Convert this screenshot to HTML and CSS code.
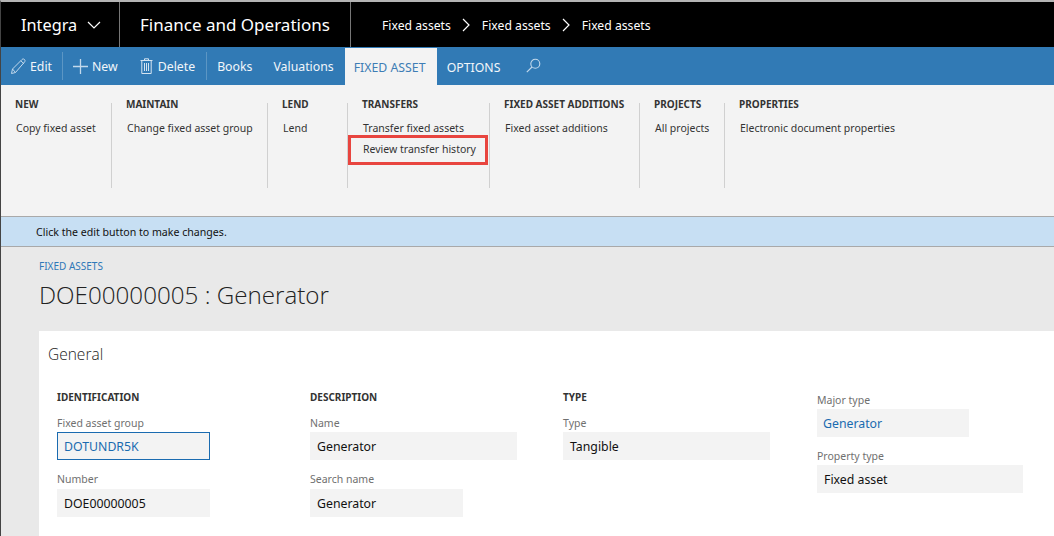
FILE: index.html
```html
<!DOCTYPE html>
<html lang="en">
<head>
<meta charset="utf-8">
<title>Fixed assets</title>
<link rel="stylesheet" href="styles.css">
</head>
<body>
<div class="app">
  <header class="topbar">
    <div class="company">Integra
      <svg class="chev-down" width="14" height="8" viewBox="0 0 14 8"><path d="M1 1l6 6 6-6" fill="none" stroke="#fff" stroke-width="1.2"/></svg>
    </div>
    <div class="appname">Finance and Operations</div>
    <nav class="crumbs">
      <span>Fixed assets</span>
      <svg width="8" height="14" viewBox="0 0 8 14"><path d="M1 1l6 6-6 6" fill="none" stroke="#fff" stroke-width="1.2"/></svg>
      <span>Fixed assets</span>
      <svg width="8" height="14" viewBox="0 0 8 14"><path d="M1 1l6 6-6 6" fill="none" stroke="#fff" stroke-width="1.2"/></svg>
      <span>Fixed assets</span>
    </nav>
  </header>
  <div class="actionbar">
    <div class="action a-edit">
      <svg width="17" height="17" viewBox="0 0 17 17"><path d="M1.500 15.500l1-4.500L12 1.500c.8-.7 1.800-.7 2.500 0s.7 1.700 0 2.500L5.500 14.500zM2.500 11l3 3.500M10.800 2.800l3.200 3" fill="none" stroke="#c3d9ec" stroke-width="1"/></svg>
      <span>Edit</span>
    </div>
    <i class="vsep"></i>
    <div class="action a-new">
      <svg width="15" height="15" viewBox="0 0 15 15"><path d="M7.500 0v15M0 7.500h15" fill="none" stroke="#c3d9ec" stroke-width="1.300"/></svg>
      <span>New</span>
    </div>
    <div class="action a-del">
      <svg width="13" height="16" viewBox="0 0 13 16"><path d="M.5 2.500h12M4.500 2.500V.8h4v1.700M1.800 2.500v13h9.400v-13M4.500 5v8M6.500 5v8M8.500 5v8" fill="none" stroke="#d5e4f1" stroke-width="1"/></svg>
      <span>Delete</span>
    </div>
    <i class="vsep"></i>
    <div class="action a-books">Books</div>
    <div class="action a-val">Valuations</div>
    <div class="tab tab-active">FIXED ASSET</div>
    <div class="tab">OPTIONS</div>
    <svg class="search" width="15" height="15" viewBox="0 0 15 15"><circle cx="9.300" cy="5.700" r="4.500" fill="none" stroke="#c3d9ec" stroke-width="1.100"/><path d="M6 9L.8 14.200" fill="none" stroke="#c3d9ec" stroke-width="1.100"/></svg>
  </div>
  <section class="ribbon">
    <div class="rgroup g1"><h3>NEW</h3><p>Copy fixed asset</p></div>
    <div class="rgroup g2"><h3>MAINTAIN</h3><p>Change fixed asset group</p></div>
    <div class="rgroup g3"><h3>LEND</h3><p>Lend</p></div>
    <div class="rgroup g4"><h3>TRANSFERS</h3><p>Transfer fixed assets</p><p>Review transfer history</p></div>
    <div class="rgroup g5"><h3>FIXED ASSET ADDITIONS</h3><p>Fixed asset additions</p></div>
    <div class="rgroup g6"><h3>PROJECTS</h3><p>All projects</p></div>
    <div class="rgroup g7"><h3>PROPERTIES</h3><p>Electronic document properties</p></div>
    <div class="callout"></div>
  </section>
  <div class="notice">Click the edit button to make changes.</div>
  <main class="page">
    <a class="pagecrumb">FIXED ASSETS</a>
    <h1>DOE00000005 : Generator</h1>
    <section class="card">
      <h2>General</h2>
      <div class="cols">
        <div class="col">
          <h4>IDENTIFICATION</h4>
          <label>Fixed asset group</label>
          <div class="field w-s focus link">DOTUNDR5K</div>
          <label>Number</label>
          <div class="field w-s">DOE00000005</div>
        </div>
        <div class="col">
          <h4>DESCRIPTION</h4>
          <label>Name</label>
          <div class="field w-l">Generator</div>
          <label>Search name</label>
          <div class="field w-s">Generator</div>
        </div>
        <div class="col">
          <h4>TYPE</h4>
          <label>Type</label>
          <div class="field w-l">Tangible</div>
        </div>
        <div class="col col-free">
          <label>Major type</label>
          <div class="field w-s link">Generator</div>
          <label>Property type</label>
          <div class="field w-m">Fixed asset</div>
        </div>
      </div>
    </section>
  </main>
</div>
</body>
</html>
```
FILE: styles.css
```css
* { box-sizing: border-box; }
html, body { margin: 0; padding: 0; }
body { width: 1054px; height: 536px; overflow: hidden; background: #e9e9e9; font-family: "Noto Sans", "Open Sans", sans-serif; color: #222; }
.app { position: relative; width: 1054px; height: 536px; overflow: hidden; border-top: 2px solid #b4b4b4; border-left: 1px solid #444; display: flex; flex-direction: column; }

.topbar { flex: none; height: 45px; background: #000; color: #fff; display: flex; align-items: center; }
.company { width: 119px; height: 100%; padding-left: 20px; display: flex; align-items: center; gap: 10px; font-size: 16.300px; border-right: 1px solid #777; }
.appname { width: 231px; height: 100%; padding-left: 20px; display: flex; align-items: center; font-size: 17px; border-right: 1px solid #777; }
.crumbs { display: flex; align-items: center; padding: 1px 0 0 31px; gap: 11.500px; font-size: 12.200px; }

.actionbar { flex: none; height: 38px; background: #317ab5; color: #f2f6fa; display: flex; align-items: center; font-size: 12.300px; }
.action { display: flex; align-items: center; gap: 4px; white-space: nowrap; }
.a-edit { margin-left: 9px; gap: 3px; }
.vsep { width: 1px; height: 28px; background: #5c96c4; }
.a-edit + .vsep { margin-left: 10px; }
.a-new { margin-left: 10px; }
.a-del { margin-left: 22px; gap: 5px; }
.a-del + .vsep { margin-left: 11px; }
.a-books { margin-left: 10px; }
.a-val { margin-left: 21px; }
.tab { height: 37px; align-self: flex-end; padding: 2px 10px 0; display: flex; align-items: center; white-space: nowrap; }
.tab-active { background: #f3f3f3; color: #3e7db5; margin-left: 11px; width: 92px; padding-left: 9px; padding-right: 0; }
.search { margin-left: 16px; margin-top: -1px; }

.ribbon { position: relative; flex: none; height: 132px; background: #f3f3f3; display: flex; padding-top: 18px; border-bottom: 1px solid #a9a9a9; }
.rgroup { height: 85px; padding-left: 14px; border-right: 1px solid #d0d0d0; }
.rgroup h3 { margin: -6px 0 10px; font-size: 10px; line-height: 14px; font-weight: 700; color: #333; white-space: nowrap; }
.rgroup p { margin: 0 0 7px; padding-left: 1px; font-size: 10.500px; line-height: 14px; color: #333; white-space: nowrap; }
.g1 { width: 111px; }
.g2 { width: 156px; }
.g3 { width: 80px; }
.g4 { width: 142px; }
.g5 { width: 150px; }
.g6 { width: 85px; }
.g7 { border-right: 0; }
.callout { position: absolute; left: 347px; top: 50px; width: 140px; height: 30px; border: 3px solid #e8453f; }

.notice { flex: none; height: 30px; background: #c7dff3; border-bottom: 1px solid #a9a9a9; padding-left: 35px; display: flex; align-items: center; font-size: 10.600px; color: #111; }

.page { flex: 1; padding: 12px 0 0 38px; min-height: 0; }
.pagecrumb { display: block; font-size: 10px; line-height: 14px; color: #2f78b8; }
h1 { margin: 6px 0 0; font-family: "Open Sans", "Noto Sans", sans-serif; font-size: 24.200px; line-height: 32px; font-weight: 300; color: #222; }
.card { margin-top: 20px; height: 220px; background: #fff; padding: 13px 0 0 9px; }
h2 { margin: 0; font-family: "Open Sans", "Noto Sans", sans-serif; font-size: 15.500px; line-height: 20px; font-weight: 300; color: #222; }
.cols { display: flex; margin-top: 26px; padding-left: 9px; }
.col { width: 253px; flex: none; }
.col-free { margin-top: 3px; margin-left: 1px; }
h4 { margin: 0 0 12px; font-size: 10px; line-height: 14px; font-weight: 700; color: #333; }
label { display: block; font-size: 10.500px; line-height: 14px; color: #707070; margin-bottom: 2px; }
.field { height: 28px; background: #f3f3f3; padding: 1px 0 0 7px; display: flex; align-items: center; font-size: 12.300px; color: #111; margin-bottom: 12px; }
.col:not(.col-free) .field + label { margin-bottom: 3px; }
.w-s { width: 153px; }
.w-m { width: 206px; }
.w-l { width: 207px; }
.col-free .w-s { width: 152px; padding-left: 6px; }
.link { color: #1a6bb0; }
.focus { border: 1px solid #1a6bb0; padding: 0 0 0 6px; }
```
